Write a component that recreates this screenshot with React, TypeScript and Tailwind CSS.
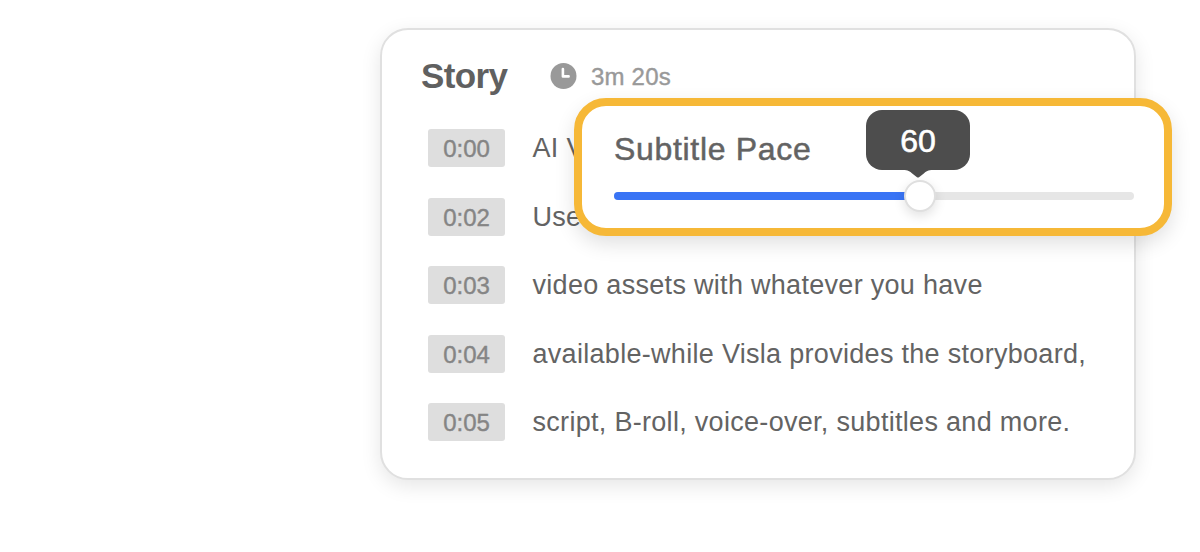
import React, { useState } from 'react';

interface Line {
  time: string;
  text: string;
}

const LINES: Line[] = [
  { time: '0:00', text: 'AI V' },
  { time: '0:02', text: 'Use' },
  { time: '0:03', text: 'video assets with whatever you have' },
  { time: '0:04', text: 'available-while Visla provides the storyboard,' },
  { time: '0:05', text: 'script, B-roll, voice-over, subtitles and more.' },
];

const ClockIcon: React.FC = () => (
  <svg width="27" height="26" viewBox="0 0 27 26" fill="none">
    <circle cx="13.5" cy="13" r="13" fill="#999999" />
    <path d="M12.9 6.1V13.4H18.6" stroke="#ffffff" strokeWidth="2.6" strokeLinecap="round" strokeLinejoin="round" />
  </svg>
);

const SubtitlePace: React.FC = () => {
  const [value] = useState(60);
  // the thumb centre sits slightly inside the raw percentage
  const position = `${value - 1.15}%`;

  return (
    <div className="absolute left-[192px] top-[68px] w-[598px] h-[138px] rounded-[32px] border-8 border-[#f6b837] bg-white pl-8 pr-[30px] pt-[23px] shadow-[0_8px_20px_rgba(0,0,0,0.12)]">
      <h3 className="h-10 text-[32px] leading-10 font-normal text-[#636363] whitespace-nowrap tracking-[0.68px] [-webkit-text-stroke:0.5px_#636363]">Subtitle Pace</h3>
      <div className="relative mt-[23px] h-2 rounded-full bg-[#e6e6e6]">
        <div className="h-2 rounded-full bg-[#3974f5]" style={{ width: position }}></div>

        {/* Thumb */}
        <div
          className="absolute -top-3 w-8 h-8 -translate-x-1/2 rounded-full border-2 border-[#dfdfdf] bg-white shadow-[0_4px_12px_rgba(0,0,0,0.12)]"
          style={{ left: position }}
        ></div>

        {/* Value bubble */}
        <div className="absolute -top-[82px] -ml-0.5 -translate-x-1/2" style={{ left: position }}>
          <div className="w-[104px] h-[60px] rounded-2xl bg-[#4d4d4d] flex items-center justify-center">
            <span className="text-[32px] leading-none text-white pt-0.5 [-webkit-text-stroke:0.6px_#ffffff]">{value}</span>
          </div>
          <svg className="absolute left-[37px] top-[59px]" width="30" height="9" viewBox="0 0 30 9" fill="#4d4d4d">
            <path d="M0 0H30V1C25 1 23 2.5 20.8 4.4L16 8.2Q15 9 14 8.2L9.2 4.4C7 2.5 5 1 0 1Z" />
          </svg>
        </div>
      </div>
    </div>
  );
};

const App: React.FC = () => {
  return (
    <div className="w-[1200px] h-[552px] overflow-hidden bg-white pl-[380px] pt-7 font-['Liberation_Sans',Arial,sans-serif]">
      <div className="relative w-[756px] h-[452px] rounded-[28px] border-2 border-[#e0e0e0] bg-white shadow-[0_6px_20px_rgba(0,0,0,0.1)]">
        {/* Header */}
        <div className="flex items-center h-[92px] pl-[39px]">
          <h2 className="w-[129px] text-[35px] font-bold text-[#606060] tracking-[-0.6px]">Story</h2>
          <ClockIcon />
          <span className="ml-[14px] pt-0.5 text-[24px] text-[#999999] whitespace-nowrap tracking-[0.2px] [-webkit-text-stroke:0.4px_#999999]">3m 20s</span>
        </div>

        {/* Transcript */}
        <div className="flex flex-col gap-[30.6px] pl-[46px] pt-[7px]">
          {LINES.map(line => (
            <div key={line.time} className="flex items-center h-[38px]">
              <div className="w-[77px] h-[38px] rounded-[3px] bg-[#dedede] flex items-center justify-center text-[24px] text-[#858585] pt-0.5 [-webkit-text-stroke:0.4px_#858585]">
                {line.time}
              </div>
              <p className="ml-[27.5px] text-[27px] leading-[38px] text-[#636363] whitespace-nowrap tracking-[0.3px]">{line.text}</p>
            </div>
          ))}
        </div>

        <SubtitlePace />
      </div>
    </div>
  );
};

export default App;
